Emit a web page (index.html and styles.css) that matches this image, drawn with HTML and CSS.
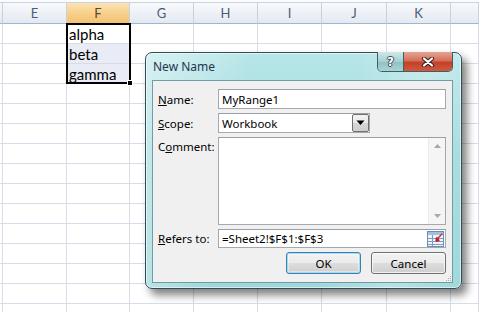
FILE: index.html
```html
<!DOCTYPE html>
<html>
<head>
<meta charset="utf-8">
<title>New Name</title>
<link rel="stylesheet" href="styles.css">
</head>
<body>
<div class="sheet">
  <div class="hdr">
    <div class="hc"></div><div class="hc">E</div><div class="hc sel">F</div><div class="hc">G</div><div class="hc">H</div><div class="hc">I</div><div class="hc">J</div><div class="hc">K</div><div class="hc"></div>
  </div>
  <div class="row"><i></i><i></i><i class="txt">alpha</i><i></i><i></i><i></i><i></i><i></i><i></i></div>
  <div class="row"><i></i><i></i><i class="txt tint">beta</i><i></i><i></i><i></i><i></i><i></i><i></i></div>
  <div class="row"><i></i><i></i><i class="txt tint">gamma</i><i></i><i></i><i></i><i></i><i></i><i></i></div>
  <div class="row"><i></i><i></i><i></i><i></i><i></i><i></i><i></i><i></i><i></i></div>
  <div class="row"><i></i><i></i><i></i><i></i><i></i><i></i><i></i><i></i><i></i></div>
  <div class="row"><i></i><i></i><i></i><i></i><i></i><i></i><i></i><i></i><i></i></div>
  <div class="row"><i></i><i></i><i></i><i></i><i></i><i></i><i></i><i></i><i></i></div>
  <div class="row"><i></i><i></i><i></i><i></i><i></i><i></i><i></i><i></i><i></i></div>
  <div class="row"><i></i><i></i><i></i><i></i><i></i><i></i><i></i><i></i><i></i></div>
  <div class="row"><i></i><i></i><i></i><i></i><i></i><i></i><i></i><i></i><i></i></div>
  <div class="row"><i></i><i></i><i></i><i></i><i></i><i></i><i></i><i></i><i></i></div>
  <div class="row"><i></i><i></i><i></i><i></i><i></i><i></i><i></i><i></i><i></i></div>
  <div class="row"><i></i><i></i><i></i><i></i><i></i><i></i><i></i><i></i><i></i></div>
  <div class="row"><i></i><i></i><i></i><i></i><i></i><i></i><i></i><i></i><i></i></div>
  <div class="row"><i></i><i></i><i></i><i></i><i></i><i></i><i></i><i></i><i></i></div>
</div>
<div class="selection"><span class="handle"></span></div>

<div class="dlg">
  <div class="titlebar">
    <span class="title">New Name</span>
    <div class="caption">
      <span class="cbtn help">?</span>
      <span class="cbtn close">
        <svg width="14" height="10" viewBox="0 0 14 10"><path d="M3 1.5 L11 8.5 M11 1.5 L3 8.5" stroke="#3a2520" stroke-width="4.2" stroke-linecap="round"/><path d="M3 1.5 L11 8.5 M11 1.5 L3 8.5" stroke="#fff" stroke-width="2.2" stroke-linecap="round"/></svg>
      </span>
    </div>
  </div>
  <div class="client">
    <div class="form">
      <label class="lbl"><u>N</u>ame:</label>
      <div class="box">MyRange1</div>
      <label class="lbl"><u>S</u>cope:</label>
      <div class="combo">
        <div class="box cbox">Workbook</div>
        <span class="drop"><svg width="9" height="6" viewBox="0 0 9 6"><path d="M0.5 0.5 H8.5 L4.5 5 Z" fill="#000"/></svg></span>
      </div>
      <label class="lbl top">C<u>o</u>mment:</label>
      <div class="box area">
        <div class="areatext"></div>
        <div class="vscroll">
          <svg width="7" height="4" viewBox="0 0 7 4"><path d="M0 4 L3.5 0 L7 4 Z" fill="#a8a8a8"/></svg>
          <svg width="7" height="4" viewBox="0 0 7 4"><path d="M0 0 L3.5 4 L7 0 Z" fill="#a8a8a8"/></svg>
        </div>
      </div>
      <label class="lbl"><u>R</u>efers to:</label>
      <div class="box refers">
        <span class="reftext">=Sheet2!$F$1:$F$3</span>
        <span class="refbtn">
          <svg width="17" height="16" viewBox="0 0 17 16">
            <rect x="0.5" y="0.5" width="16" height="15" fill="#eef4fa" stroke="#6c8db0"/>
            <rect x="1" y="1" width="15" height="3" fill="#9fc0e2"/>
            <path d="M1 7.5 H16 M1 10.5 H16 M1 13.5 H16 M5.5 4 V15" stroke="#7c9cc0" stroke-width="1"/>
            <path d="M15 2 L10.5 6.5 L12.5 8.5 L8 10 L9.5 5.5 L11.5 7.5 L15.5 3.5 Z" fill="#d8262a"/>
            <path d="M9 6 L13 10 L9 11 Z" fill="#c41e22"/>
          </svg>
        </span>
      </div>
    </div>
    <div class="buttons">
      <span class="btn default">OK</span>
      <span class="btn">Cancel</span>
    </div>
    <svg class="grip" width="7" height="7" viewBox="0 0 7 7">
      <rect x="5" y="1" width="1" height="1" fill="#9aa"/><rect x="3" y="3" width="1" height="1" fill="#9aa"/><rect x="5" y="3" width="1" height="1" fill="#9aa"/>
      <rect x="1" y="5" width="1" height="1" fill="#9aa"/><rect x="3" y="5" width="1" height="1" fill="#9aa"/><rect x="5" y="5" width="1" height="1" fill="#9aa"/>
    </svg>
  </div>
</div>
</body>
</html>
```
FILE: styles.css
```css
* { box-sizing: border-box; }
html, body { margin: 0; padding: 0; }
body {
  width: 479px; height: 312px; overflow: hidden;
  background: #fff; position: relative;
  font-family: "Lato", "Open Sans", sans-serif;
}

/* spreadsheet */
.sheet { display: flex; flex-direction: column; }
.hdr, .row {
  display: grid;
  grid-template-columns: 3px 64px 63px 64px 64px 64px 65px 64px 28px;
}
.hdr {
  height: 24px; padding-top: 3px;
  background: linear-gradient(#fbfcfd 0 2px, #c9d4e1 2px 3px, #fff 3px);
}
.hc {
  height: 21px;
  border-right: 1px solid #c6d2df;
  border-bottom: 1px solid #9eb6ce;
  background: linear-gradient(#f7f9fc, #e4e9f1);
  color: #4a5d76; font-size: 13px; text-align: center; line-height: 20px;
}
.hc.sel {
  background: linear-gradient(#fbe3b4, #f6cd85 60%, #f3c374);
  border-bottom-color: #c2a26a;
  color: #5a4a30;
}
.row i {
  height: 20px;
  border-right: 1px solid #d6dce8;
  border-bottom: 1px solid #d6dce8;
  font-style: normal;
}
.row i.txt {
  font-size: 15px; color: #000; line-height: 20px; padding-left: 2px;
}
.row i.tint { background: #e9ecf4; }

.selection {
  position: absolute; left: 66px; top: 23px; width: 65px; height: 61px;
  border: 2px solid #000;
}
.handle {
  position: absolute; right: -4px; bottom: -4px; width: 6px; height: 6px;
  background: #000; border: 1px solid #fff;
}

/* dialog */
.dlg {
  position: absolute; left: 145px; top: 52px; width: 317px; height: 237px;
  border: 1px solid #2f4e57; border-radius: 7px;
  background:
    linear-gradient(100deg, rgba(255,255,255,.45) 0%, rgba(255,255,255,0) 30%, rgba(255,255,255,0) 60%, rgba(255,255,255,.25) 80%, rgba(255,255,255,0) 100%),
    linear-gradient(#b8e6e8, #a2dadd 40%, #9fd8db);
  box-shadow: 5px 6px 8px rgba(0,0,0,.5), inset 0 0 0 1px rgba(255,255,255,.55);
  display: flex; flex-direction: column;
  padding: 0 8px 5px 6px;
}
.titlebar {
  height: 27px; display: flex; align-items: center; position: relative;
}
.title {
  padding-left: 1px; font-family: "Noto Sans", sans-serif; font-size: 12px; color: #1e3650;
}
.caption {
  position: absolute; right: 0; top: -1px; display: flex; height: 20px;
  border: 1px solid #3d5f68; border-top: none; border-radius: 0 0 5px 5px; overflow: hidden;
}
.cbtn { display: flex; align-items: center; justify-content: center; height: 100%; }
.help {
  width: 26px;
  background: linear-gradient(#cde9ea, #a6cfd1 50%, #8fc0c3 51%, #a9d4d6);
  border-right: 1px solid #3d5f68;
  color: #fff; font-family: "DejaVu Sans", sans-serif; font-weight: bold; font-size: 12px;
  text-shadow: 1px 0 #3c4b50, -1px 0 #3c4b50, 0 1px #3c4b50, 0 -1px #3c4b50;
}
.close {
  width: 48px;
  background: linear-gradient(#e6a492, #d4705a 45%, #c24128 55%, #d3583d);
}

.client {
  flex: 1; position: relative;
  background: #f0f0f0;
  border: 1px solid #6f9ca6;
  padding: 8px 6px 0 5px;
  font-family: "Noto Sans", sans-serif; font-size: 11.5px; color: #000;
}
.form {
  display: grid;
  grid-template-columns: 60px 228px;
  grid-template-rows: 20px 20px 88px 19px;
  row-gap: 4px;
}
.lbl { display: flex; align-items: center; }
.lbl.top { align-items: flex-start; padding-top: 2px; }
.box {
  background: #fff; border: 1px solid #a5a8ae; border-top-color: #9a9ea5;
  display: flex; align-items: center; padding-left: 3px;
}
.combo { display: flex; width: 152px; position: relative; }
.combo .cbox { flex: 1; }
.drop {
  position: absolute; right: 1px; top: 1px; bottom: 1px; width: 17px;
  border: 1px solid #707070; border-radius: 2px;
  background: linear-gradient(#f3f3f3, #e8e8e8 50%, #d6d6d6 51%, #cfcfcf);
  display: flex; align-items: center; justify-content: center;
}
.area { padding: 0; align-items: stretch; }
.areatext { flex: 1; }
.vscroll {
  width: 17px; background: #f5f5f5; border-left: 1px solid #ececec;
  display: flex; flex-direction: column; justify-content: space-between; align-items: center;
  padding: 6px 0 6px;
}
.refers { justify-content: space-between; padding-right: 1px; }
.refbtn { display: flex; }
.buttons {
  display: flex; justify-content: flex-end; gap: 10px;
  margin-top: 4px; width: 288px;
}
.btn {
  width: 75px; height: 22px;
  border: 1px solid #707070; border-radius: 3px;
  background: linear-gradient(#f2f2f2, #ebebeb 50%, #dddddd 51%, #cfcfcf);
  box-shadow: inset 0 0 0 1px rgba(255,255,255,.7);
  display: flex; align-items: center; justify-content: center;
}
.btn.default {
  border-color: #3c7fb1;
  box-shadow: inset 0 0 0 1px #a6dbf6, inset 0 0 0 2px rgba(255,255,255,.4);
}
.grip { position: absolute; right: 0; bottom: 0; }
```
